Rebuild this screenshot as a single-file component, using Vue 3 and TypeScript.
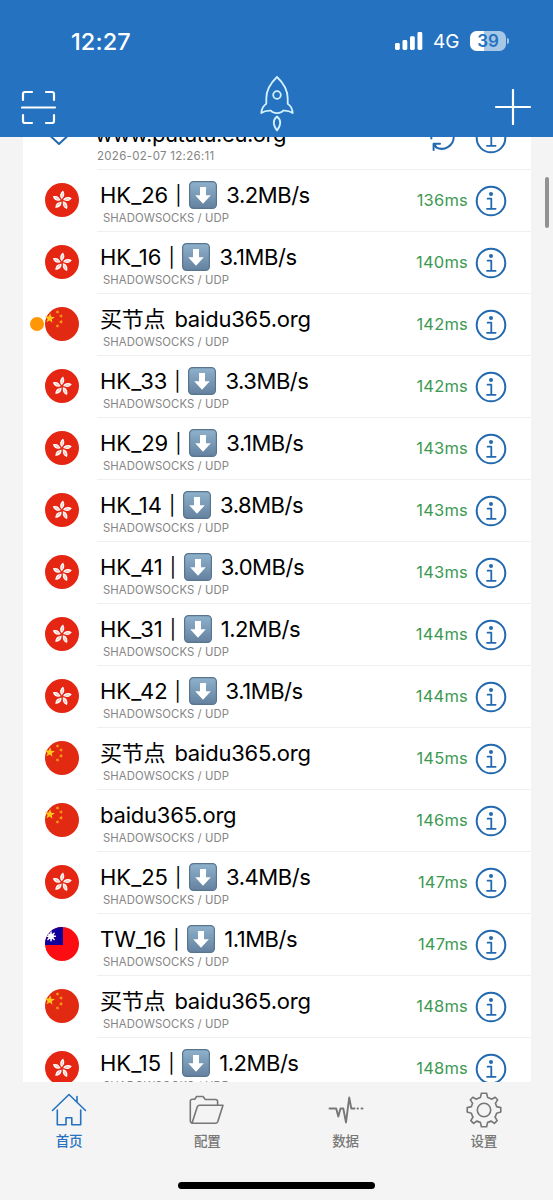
<script setup lang="ts">
type Region = 'hk' | 'cn' | 'tw'

interface ServerNode {
  region: Region
  name: string
  speed?: string
  ping: number
  active?: boolean
}

const nodes: ServerNode[] = [
  { region: 'hk', name: 'HK_26', speed: '3.2MB/s', ping: 136 },
  { region: 'hk', name: 'HK_16', speed: '3.1MB/s', ping: 140 },
  { region: 'cn', name: '买节点 baidu365.org', ping: 142, active: true },
  { region: 'hk', name: 'HK_33', speed: '3.3MB/s', ping: 142 },
  { region: 'hk', name: 'HK_29', speed: '3.1MB/s', ping: 143 },
  { region: 'hk', name: 'HK_14', speed: '3.8MB/s', ping: 143 },
  { region: 'hk', name: 'HK_41', speed: '3.0MB/s', ping: 143 },
  { region: 'hk', name: 'HK_31', speed: '1.2MB/s', ping: 144 },
  { region: 'hk', name: 'HK_42', speed: '3.1MB/s', ping: 144 },
  { region: 'cn', name: '买节点 baidu365.org', ping: 145 },
  { region: 'cn', name: 'baidu365.org', ping: 146 },
  { region: 'hk', name: 'HK_25', speed: '3.4MB/s', ping: 147 },
  { region: 'tw', name: 'TW_16', speed: '1.1MB/s', ping: 147 },
  { region: 'cn', name: '买节点 baidu365.org', ping: 148 },
  { region: 'hk', name: 'HK_15', speed: '1.2MB/s', ping: 148 },
]

const petals = [0, 72, 144, 216, 288]
const rays = [0, 45, 90, 135]
const smallStars = [
  { x: 12.5, y: 5 },
  { x: 16, y: 9 },
  { x: 16, y: 14.8 },
  { x: 12.5, y: 19 },
]
const starPath = 'M0-5L1.4-1.6L5-1.5L2.1.8L3 4.2L0 2.2L-3 4.2L-2.1.8L-5-1.5L-1.4-1.6Z'
</script>

<template>
  <div class="screen">
    <header class="header">
      <div class="status">
        <span class="clock">12:27</span>
        <div class="signals">
          <svg class="bars" width="28" height="18" viewBox="0 0 28 18">
            <rect x="0" y="11" width="4.8" height="7" rx="1.4" />
            <rect x="7.5" y="8" width="4.8" height="10" rx="1.4" />
            <rect x="15" y="4.3" width="4.8" height="13.7" rx="1.4" />
            <rect x="22.5" y="0" width="4.8" height="18" rx="1.4" />
          </svg>
          <span class="network">4G</span>
          <div class="battery"><span>39</span></div>
          <i class="battery-cap"></i>
        </div>
      </div>
      <div class="toolbar">
        <svg class="scan" width="36" height="36" viewBox="0 0 36 36">
          <path d="M2 10V4Q2 2 4 2H11M25 2H31Q33 2 33 4V10M2 25V31Q2 33 4 33H11M25 33H31Q33 33 33 31V25M1 17.5H34" />
        </svg>
        <svg class="rocket" width="36" height="60" viewBox="0 0 36 60">
          <path d="M18 2C11.8 7.8 7.3 15.5 7.3 23.5V28.8C3.8 31.2 2.6 34 2.3 38C5.6 35.8 8.6 35.4 12 35.7C13.5 38.8 22.5 38.8 24 35.7C27.4 35.4 30.4 35.8 33.7 38C33.4 34 32.2 31.2 28.7 28.8V23.5C28.7 15.5 24.2 7.8 18 2Z" />
          <circle cx="18" cy="20" r="3.8" />
          <path d="M18 41.5C14.3 44.5 13.3 49 18 55.6C22.7 49 21.7 44.5 18 41.5Z" />
        </svg>
        <svg class="plus" width="36" height="36" viewBox="0 0 36 36">
          <path d="M18 1V35M1 18H35" />
        </svg>
      </div>
    </header>

    <main class="content">
      <div class="list">
        <div class="row group">
          <div class="lead">
            <svg class="chevron" width="18" height="10" viewBox="0 0 18 10">
              <path d="M1 0.5L9 8L17 0.5" />
            </svg>
          </div>
          <div class="body">
            <div class="labels">
              <div class="title">www.pututu.eu.org</div>
              <div class="stamp">2026-02-07 12:26:11</div>
            </div>
            <svg class="refresh" width="28" height="28" viewBox="0 0 28 28">
              <path d="M7.8 4.5A12 12 0 0 0 3.4 15.5M8 24.3A12 12 0 0 0 25.7 13A12 12 0 0 0 14 2.3M5.6 27V20.8H12M5.8 21L9 24.8" />
            </svg>
            <svg class="info" width="32" height="32" viewBox="0 0 32 32">
              <circle class="ring" cx="16" cy="16" r="14.3" />
              <circle class="dot" cx="16" cy="9" r="2" />
              <path d="M12.6 13.7H16.3V23.8M12 23.8H20.6" />
            </svg>
          </div>
        </div>

        <div v-for="(node, index) in nodes" :key="index" class="row">
          <div class="lead">
            <i v-if="node.active" class="active-dot"></i>
            <svg v-if="node.region === 'hk'" class="flag" viewBox="0 0 34 34">
              <circle cx="17" cy="17" r="17" fill="#e52612" />
              <g v-for="angle in petals" :key="angle" :transform="`translate(17 17.4) rotate(${angle + 2})`">
                <path d="M-.1-1.2C-2.9-3.2-2.6-7.8.8-10C1-8.9 2.7-7.4 1.9-4.6C1.5-3.2.3-2.6-.1-1.2Z" fill="#fff" />
                <path d="M0-3.8C-.4-5 .1-6.2.7-7" fill="none" stroke="#ee8173" stroke-width=".6" />
              </g>
            </svg>
            <svg v-else-if="node.region === 'cn'" class="flag" viewBox="0 0 34 34">
              <circle cx="17" cy="17" r="17" fill="#e22a13" />
              <path :d="starPath" fill="#ffc61b" transform="translate(4.8 11.3) rotate(5)" />
              <path
                v-for="star in smallStars"
                :key="star.y"
                :d="starPath"
                fill="#f9a51a"
                :transform="`translate(${star.x} ${star.y}) rotate(20) scale(.42)`"
              />
            </svg>
            <svg v-else class="flag" viewBox="0 0 34 34">
              <defs>
                <clipPath id="tw-round"><circle cx="17" cy="17" r="17" /></clipPath>
              </defs>
              <g clip-path="url(#tw-round)">
                <rect width="34" height="34" fill="#fc0d12" />
                <rect width="18" height="18" fill="#12009b" />
                <g transform="translate(6 9.3)" stroke="#fff" stroke-width="1.5">
                  <path v-for="angle in rays" :key="angle" d="M-4.4 0H4.4" :transform="`rotate(${angle})`" />
                  <circle r="2.9" fill="#fff" stroke="none" />
                </g>
              </g>
            </svg>
          </div>
          <div class="body">
            <div class="labels">
              <div class="title">
                <template v-if="node.speed">
                  <span class="code">{{ node.name }}</span>
                  <span class="divider">|</span>
                  <svg class="down" width="28" height="28" viewBox="0 0 28 28">
                    <defs>
                      <linearGradient :id="`tile-${index}`" x1="0" y1="0" x2="0" y2="1">
                        <stop offset="0" stop-color="#8fb2cc" />
                        <stop offset="1" stop-color="#64819f" />
                      </linearGradient>
                    </defs>
                    <rect x=".6" y=".6" width="26.8" height="26.8" rx="4" :fill="`url(#tile-${index})`" stroke="#587590" stroke-width="1.2" />
                    <path d="M11 6H17V14.2H21.8L14 22.8L6.2 14.2H11Z" fill="#fff" />
                  </svg>
                  <span class="speed">{{ node.speed }}</span>
                </template>
                <span v-else class="domain">{{ node.name }}</span>
              </div>
              <div class="protocol">SHADOWSOCKS / UDP</div>
            </div>
            <span class="ping">{{ node.ping }}ms</span>
            <svg class="info" width="32" height="32" viewBox="0 0 32 32">
              <circle class="ring" cx="16" cy="16" r="14.3" />
              <circle class="dot" cx="16" cy="9" r="2" />
              <path d="M12.6 13.7H16.3V23.8M12 23.8H20.6" />
            </svg>
          </div>
        </div>
      </div>
      <i class="scrollbar"></i>
    </main>

    <footer class="footer">
      <nav class="tabs">
        <div class="tab current">
          <svg width="36" height="36" viewBox="0 0 36 36">
            <path d="M1.5 18.5L18 2.5L34.5 18.5M26 10V4.5M6.3 18V32.7H15V25.7H20.8V32.7H29.7V18" />
          </svg>
          <span>首页</span>
        </div>
        <div class="tab">
          <svg width="36" height="36" viewBox="0 0 36 36">
            <path d="M3 31.2Q1.3 30.5 1.3 29V9.3Q1.3 7.2 3.4 7.2H5.8L7.6 4.5H14L16.3 7.5H26.5Q28.6 7.5 28.6 9.5V13.2M3 31.2L8.2 15Q8.8 13.2 10.5 13.2H34L28.8 29.5Q28.2 31.2 26.5 31.2H3Z" />
          </svg>
          <span>配置</span>
        </div>
        <div class="tab">
          <svg class="pulse" width="36" height="36" viewBox="0 0 36 36">
            <path d="M1.5 16.5H8.2L10.3 24.5L12.5 16.5H15.3L18 30.5L21.2 5.5L23.3 16.5H26.5M29.5 16.5H30M33.5 16.5H34.5" />
          </svg>
          <span>数据</span>
        </div>
        <div class="tab">
          <svg width="36" height="36" viewBox="0 0 36 36">
            <path d="M15.4 1.2H20.6L21.6 5.4Q23.8 6 25.6 7.2L29.2 5.2L31.6 7.8L29.4 11.4Q30.2 13 30.6 14.6L34.8 15.6V20L30.6 21.2Q30 23.4 29 25L31.2 28.6L28.4 31.4L25 29Q23.4 30 21.6 30.4L20.6 34.8H15.4L14.4 30.4Q12.6 30 11 29L7.6 31.4L4.8 28.6L7 25Q6 23.4 5.4 21.2L1.2 20V15.6L5.4 14.6Q5.8 13 6.6 11.4L4.4 7.8L6.8 5.2L10.4 7.2Q12.2 6 14.4 5.4Z" />
            <circle cx="18" cy="18" r="6.7" />
          </svg>
          <span>设置</span>
        </div>
      </nav>
      <i class="home-bar"></i>
    </footer>
  </div>
</template>

<style>
body {
  margin: 0;
  background: #f4f4f4;
}
</style>

<style scoped>
.screen {
  width: 553px;
  height: 1200px;
  display: flex;
  flex-direction: column;
  overflow: hidden;
  background: #f4f4f4;
  font-family: Inter, "Noto Sans CJK SC", sans-serif;
}

svg {
  display: block;
  flex: none;
  fill: none;
  stroke-linecap: round;
  stroke-linejoin: round;
}

.header {
  flex: none;
  height: 137px;
  background: #2472c0;
  color: #fff;
}

.status {
  height: 81px;
  padding: 0 44px 0 71px;
  display: flex;
  justify-content: space-between;
  align-items: center;
}

.clock {
  padding-top: 1px;
  font-size: 23.5px;
  font-weight: 550;
  letter-spacing: 0.1px;
}

.signals {
  display: flex;
  align-items: center;
}

.bars {
  fill: #fff;
}

.network {
  margin: 2px 0 0 10px;
  width: 37px;
  font-size: 19px;
  letter-spacing: 0;
}

.battery {
  width: 36px;
  height: 20px;
  border-radius: 6.5px;
  background: linear-gradient(90deg, #fff 39%, #a7c7e7 39%);
  color: #2472c0;
  font-size: 17px;
  font-weight: 600;
  line-height: 21px;
  text-align: center;
}

.battery-cap {
  width: 2px;
  height: 6px;
  margin-left: 1px;
  border-radius: 0 3px 3px 0;
  background: #a7c7e7;
}

.toolbar {
  height: 56px;
  padding: 0 22px 0 21px;
  display: flex;
  justify-content: space-between;
  align-items: center;
}

.scan,
.plus {
  stroke: #fff;
  stroke-width: 2.2;
  margin-top: -4px;
}

.scan {
  margin-top: -3px;
}

.rocket {
  stroke: #d3f1ff;
  stroke-width: 1.8;
  margin: -8px 0 0 1px;
}

.content {
  flex: none;
  height: 945px;
  display: flex;
  overflow: hidden;
}

.list {
  width: 508px;
  margin: -29px 0 0 23px;
}

.row {
  height: 62px;
  display: flex;
  background: #fff;
}

.lead {
  width: 74px;
  display: flex;
  align-items: center;
  justify-content: flex-end;
  flex: none;
  padding: 0 18px 2px 0;
  box-sizing: border-box;
}

.flag {
  width: 34px;
  height: 34px;
}

.active-dot {
  width: 14px;
  height: 14px;
  margin-right: 1px;
  border-radius: 50%;
  background: #ff9605;
}

.body {
  flex: 1;
  display: flex;
  align-items: center;
  padding: 0 24px 0 3px;
  border-bottom: 1px solid #efefef;
}

.labels {
  flex: 1;
  height: 61px;
}

.title {
  height: 29px;
  margin-top: 11px;
  display: flex;
  align-items: center;
  white-space: nowrap;
  font-size: 22px;
  letter-spacing: -0.3px;
  line-height: 29px;
  color: #000;
}

.code {
  letter-spacing: 0;
}

.divider {
  margin: -1px 0 0 7px;
  font-size: 19px;
}

.down {
  margin: -2px 9px 0 8px;
}

.speed {
  letter-spacing: -0.45px;
}

.domain {
  letter-spacing: -0.2px;
  word-spacing: 3px;
}

.protocol {
  margin: 1px 0 0 3px;
  font-size: 11.3px;
  line-height: 15px;
  letter-spacing: 0.1px;
  color: #858585;
}

.ping {
  margin: -1px 7px 0 0;
  font-size: 16.5px;
  letter-spacing: 0.2px;
  color: #3d9952;
}

.info {
  stroke: #2269af;
  stroke-width: 1.8;
}

.ring {
  stroke-width: 2;
}

.dot {
  fill: #2269af;
  stroke: none;
}

.group .title {
  margin: 12px 0 0 -5px;
  letter-spacing: -0.45px;
}

.group .stamp {
  margin: 0 0 0 -3px;
  font-size: 11.5px;
  line-height: 15px;
  letter-spacing: 0.3px;
  color: #858585;
}

.group .info {
  margin-top: -1px;
}

.chevron {
  stroke: #2269af;
  stroke-width: 2;
  margin: 6px 11px 0 0;
}

.refresh {
  stroke: #2269af;
  stroke-width: 2;
  margin: -3px 19px 0 0;
}

.scrollbar {
  width: 4px;
  height: 51px;
  margin: 40px 0 0 14px;
  border-radius: 2px;
  background: #929292;
}

.footer {
  height: 118px;
  display: flex;
  flex-direction: column;
  align-items: center;
}

.tabs {
  width: 553px;
  height: 100px;
  display: grid;
  grid-template-columns: repeat(4, 1fr);
}

.tab {
  display: flex;
  flex-direction: column;
  align-items: center;
  padding-top: 10px;
  color: #777;
  font-size: 13.5px;
  font-weight: 500;
  line-height: 20px;
}

.tab svg {
  stroke: #777;
  stroke-width: 1.6;
}

.tab .pulse {
  stroke-width: 1.9;
}

.tab span {
  margin-top: 3px;
}

.current {
  color: #2472c0;
}

.tab.current svg {
  stroke: #2472c0;
}

.home-bar {
  width: 197px;
  height: 7px;
  border-radius: 4px;
  background: #000;
}
</style>
